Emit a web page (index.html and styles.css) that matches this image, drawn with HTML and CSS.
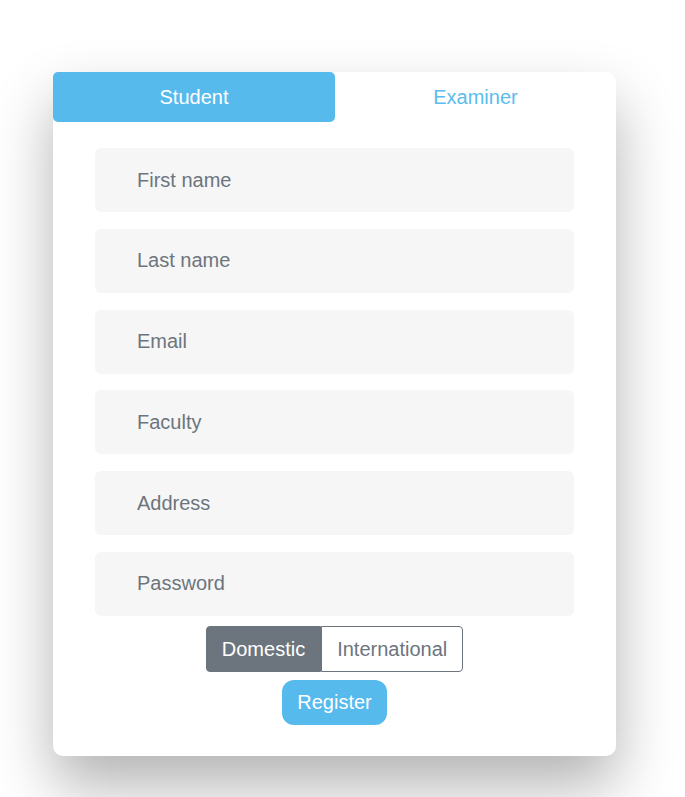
FILE: index.html
```html
<!DOCTYPE html>
<html>
<head>
<meta charset="utf-8">
<link rel="stylesheet" href="styles.css">
</head>
<body>
<div class="card">
  <div class="tabs">
    <div class="tab active">Student</div>
    <div class="tab">Examiner</div>
  </div>
  <form class="form">
    <input class="field" type="text" placeholder="First name">
    <input class="field" type="text" placeholder="Last name">
    <input class="field" type="text" placeholder="Email">
    <input class="field" type="text" placeholder="Faculty">
    <input class="field" type="text" placeholder="Address">
    <input class="field last" type="password" placeholder="Password">
    <div class="toggle">
      <span class="opt opt-on">Domestic</span><span class="opt opt-off">International</span>
    </div>
    <button class="register" type="button">Register</button>
  </form>
</div>
</body>
</html>
```
FILE: styles.css
```css
* { box-sizing: border-box; }
html, body { margin: 0; padding: 0; background: #fff; }
body {
  font-family: "Liberation Sans", Arial, sans-serif;
  padding: 72px 0 0 53px;
  min-height: 797px;
}
.card {
  width: 563px;
  height: 684px;
  background: #fff;
  border-radius: 10px;
  box-shadow: 0 30px 60px 0 rgba(0,0,0,0.3);
  display: flex;
  flex-direction: column;
}
.tabs {
  display: flex;
  height: 50px;
}
.tab {
  flex: 1;
  display: flex;
  align-items: center;
  justify-content: center;
  font-size: 20px;
  color: #5bbdee;
}
.tab.active {
  flex: 0 0 282px;
  background: #56baed;
  color: #fff;
  border-radius: 5px;
}
.form {
  display: flex;
  flex-direction: column;
  align-items: center;
  padding-top: 26px;
}
.field {
  width: 479px;
  height: 64px;
  margin-bottom: 16.8px;
  border: none;
  border-radius: 6px;
  background: #f6f6f6;
  padding: 0 0 0 42px;
  font-family: "Liberation Sans", Arial, sans-serif;
  font-size: 20px;
  color: #6c757d;
  outline: none;
}
.field::placeholder { color: #6c757d; opacity: 1; }
.field.last { margin-bottom: 10px; }
.toggle {
  display: flex;
}
.opt {
  font-size: 20px;
  line-height: 30px;
  padding: 7px 15px;
  border: 1px solid #6c757d;
}
.opt-on {
  background: #6c757d;
  color: #fff;
  border-radius: 4px 0 0 4px;
}
.opt-off {
  background: #fff;
  color: #6c757d;
  border-radius: 0 4px 4px 0;
}
.register {
  margin-top: 8px;
  background: #56baed;
  color: #fff;
  border: none;
  border-radius: 12px;
  font-family: "Liberation Sans", Arial, sans-serif;
  font-size: 20px;
  line-height: 23px;
  padding: 11px 15px;
}
```
